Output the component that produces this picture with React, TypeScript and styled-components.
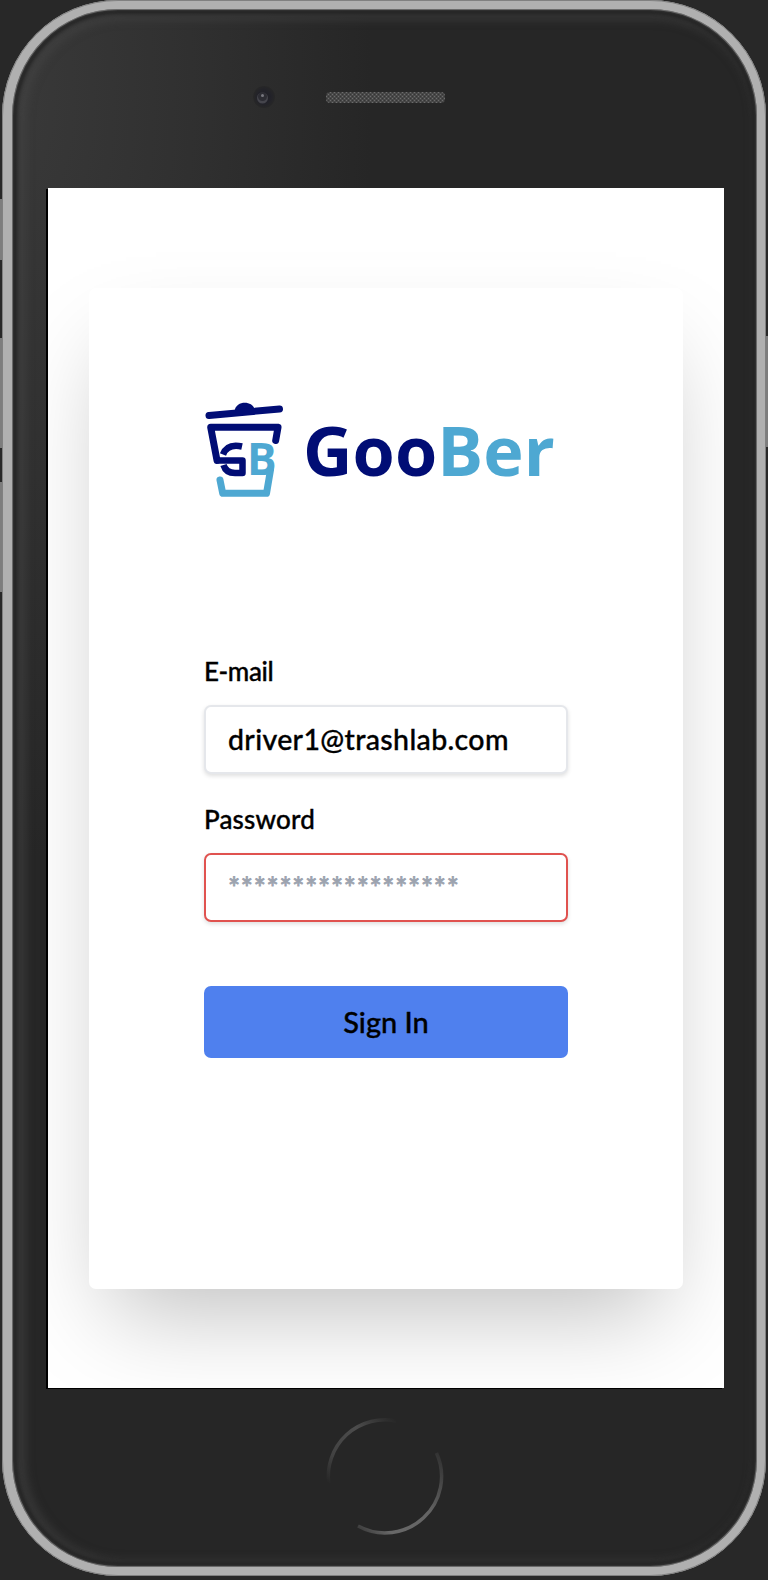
import React from "react";
import styled, { createGlobalStyle } from "styled-components";

const GlobalStyle = createGlobalStyle`
  *, *::before, *::after { box-sizing: border-box; }
  body { margin: 0; background: #282828; }
`;

const Stage = styled.div`
  position: relative;
  width: 768px;
  height: 1580px;
  padding: 0 2px 4px;
  overflow: hidden;
  background: #282828;
`;

const SideButton = styled.span<{ $side: "left" | "right"; $top: number; $length: number }>`
  position: absolute;
  ${(p) => p.$side}: 0;
  top: ${(p) => p.$top}px;
  width: 3px;
  height: ${(p) => p.$length}px;
  background: #7d7d7d;
`;

const Device = styled.div`
  position: relative;
  display: flex;
  flex-direction: column;
  width: 764px;
  height: 1576px;
  padding-left: 37px;
  border: 9px solid #b0b0b0;
  border-left-width: 10px;
  padding-left: 36px;
  border-radius: 116px;
  background: radial-gradient(360px 760px at 0 90px, #393939 0%, #303030 50%, #262626 100%);
  box-shadow: inset 0 0 0 1px #6a6a6a, inset 0 0 2px 2px #343434, inset 0 0 4px 5px #232323,
    inset 5px 2px 9px 9px rgba(72, 72, 72, 0.5);

  &::after {
    content: "";
    position: absolute;
    inset: -9px -9px -9px -10px;
    border: 1px solid #808080;
    border-radius: 116px;
    pointer-events: none;
  }
`;

const TopBezel = styled.div`
  flex: none;
  height: 179px;
`;

const Speaker = styled.svg`
  display: block;
  margin: 77px 0 0 203px;
`;

const Screen = styled.main`
  flex: none;
  display: flex;
  justify-content: center;
  align-items: center;
  width: 676px;
  height: 1200px;
  overflow: hidden;
  background: #fff;
`;

const ScreenEdge = styled.div`
  flex: none;
  width: 676px;
  box-shadow: -2px 1px 0 #000;
`;

const Card = styled.form`
  width: 594px;
  height: 1001px;
  padding: 112px 115px 0;
  border-radius: 7px;
  background: #fff;
  box-shadow: 0 45px 90px -22px rgba(0, 0, 0, 0.25);
`;

const Brand = styled.header`
  display: flex;
  align-items: flex-start;
  height: 100px;
`;

const BrandName = styled.span`
  margin: 4px 0 0 17px;
  font: 700 68.3px/92px "Open Sans", sans-serif;
  letter-spacing: 0.1px;
  color: #010d75;
  white-space: nowrap;
`;

const BrandAccent = styled.span`
  color: #4ea8d2;
`;

const Fields = styled.div`
  display: flex;
  flex-direction: column;
  margin-top: 152px;
`;

const Label = styled.label<{ $spacing: number }>`
  height: 53px;
  font: 500 26px/39px Lato, sans-serif;
  letter-spacing: ${(p) => p.$spacing}px;
  color: #000;
  -webkit-text-stroke: 0.35px #000;
`;

const Input = styled.input<{ $invalid?: boolean }>`
  width: 364px;
  height: 69px;
  margin: 0 0 26px;
  padding: 0 22px 1px;
  border: 2px solid ${(p) => (p.$invalid ? "#e0524f" : "#e5e7eb")};
  border-radius: 7px;
  outline: none;
  background: #fff;
  box-shadow: 0 2px 4px rgba(0, 0, 0, 0.13);
  font: 500 28.5px/40px Lato, sans-serif;
  letter-spacing: ${(p) => (p.$invalid ? "0.75px" : "0.35px")};
  color: #000;
  -webkit-text-stroke: 0.35px currentColor;

  &::placeholder {
    color: #9ca3af;
    opacity: 1;
    -webkit-text-stroke: 0.8px #9ca3af;
  }
`;

const Submit = styled.button`
  width: 364px;
  height: 72px;
  margin-top: 38px;
  padding: 0;
  border: 0;
  border-radius: 7px;
  background: #4f80ee;
  font: 500 29px/71px Lato, sans-serif;
  color: #000;
  -webkit-text-stroke: 0.35px #000;
`;

const HomeButton = styled.svg`
  flex: none;
  display: block;
  margin: 26px 0 0 275px;
`;

const Logo = () => (
  <svg width="82" height="100" viewBox="204 400 82 100" fill="none" strokeWidth="7" strokeLinecap="round" strokeLinejoin="round">
    <path d="M234.5 411C236 400.500 252 400.500 254.500 409Z" fill="#010d75" />
    <g stroke="#010d75">
      <path d="M209 415.500 279.500 409" />
      <path d="M275.700 440.500 278 427.300H210.700L217 460.400" />
      <path d="M216.500 460.400H242.500V473H235C229 473 225 470 223.500 465" strokeWidth="6.500" strokeLinecap="butt" />
      <path d="M223 454.500C226 446.500 233 444.500 242 446.500" strokeWidth="6.500" strokeLinecap="butt" />
    </g>
    <text x="247" y="475" fill="#4ea8d2" fontFamily="Open Sans" fontWeight="700" fontSize="44" textLength="29">B</text>
    <path d="M220 480 222.700 493.300H266.500L270.500 470" stroke="#4ea8d2" />
  </svg>
);

export default function App() {
  return (
    <>
      <GlobalStyle />
      <Stage>
        <SideButton $side="left" $top={199} $length={61} />
        <SideButton $side="left" $top={338} $length={110} />
        <SideButton $side="left" $top={482} $length={110} />
        <SideButton $side="right" $top={336} $length={111} />
        <Device>
          <TopBezel>
            <Speaker width="200" height="24" viewBox="251 86 200 24">
              <defs>
                <pattern id="mesh" x="326" y="92" width="4" height="4" patternUnits="userSpaceOnUse">
                  <rect width="4" height="4" fill="#484848" />
                  <path d="M0 0h1v1H0zM2 2h1v1H2z" fill="#6c6c6c" />
                  <path d="M2 0h1v1H2zM0 2h1v1H0z" fill="#353535" />
                </pattern>
                <radialGradient id="lens">
                  <stop offset="0" stopColor="#1f1f27" />
                  <stop offset=".6" stopColor="#222229" />
                  <stop offset="1" stopColor="#272727" />
                </radialGradient>
              </defs>
              <circle cx="264" cy="97" r="11" fill="url(#lens)" />
              <circle cx="262.500" cy="98" r="5.500" fill="#45454c" />
              <circle cx="262.500" cy="96.500" r="4.500" fill="#2c2c33" />
              <circle cx="262.500" cy="95.500" r="1.500" fill="#77777f" />
              <rect x="326" y="92" width="119" height="11" rx="4" fill="url(#mesh)" />
            </Speaker>
          </TopBezel>
          <ScreenEdge>
            <Screen>
              <Card onSubmit={(e) => e.preventDefault()}>
                <Brand>
                  <Logo />
                  <BrandName>
                    Goo<BrandAccent>Ber</BrandAccent>
                  </BrandName>
                </Brand>
                <Fields>
                  <Label htmlFor="email" $spacing={-0.4}>E-mail</Label>
                  <Input id="email" defaultValue="driver1@trashlab.com" />
                  <Label htmlFor="password" $spacing={0.15}>Password</Label>
                  <Input id="password" type="password" placeholder="******************" $invalid />
                  <Submit type="submit">Sign In</Submit>
                </Fields>
              </Card>
            </Screen>
          </ScreenEdge>
          <HomeButton width="124" height="124" viewBox="323 1414 124 124" fill="none" strokeWidth="3.5">
            <defs>
              <linearGradient id="upper" x1="0" y1="1" x2="1" y2="0">
                <stop offset="0" stopColor="#262626" />
                <stop offset=".25" stopColor="#424242" />
                <stop offset=".65" stopColor="#4c4c4c" />
                <stop offset="1" stopColor="#262626" />
              </linearGradient>
              <linearGradient id="lower" x1="1" y1="0" x2="0" y2="1">
                <stop offset="0" stopColor="#303030" />
                <stop offset=".45" stopColor="#646464" />
                <stop offset=".8" stopColor="#686868" />
                <stop offset="1" stopColor="#353535" />
              </linearGradient>
            </defs>
            <path d="M328.700 1483A56.500 56.500 0 0 1 396 1421" stroke="url(#upper)" />
            <path d="M436.500 1453A56.500 56.500 0 0 1 358 1526" stroke="url(#lower)" />
          </HomeButton>
        </Device>
      </Stage>
    </>
  );
}
